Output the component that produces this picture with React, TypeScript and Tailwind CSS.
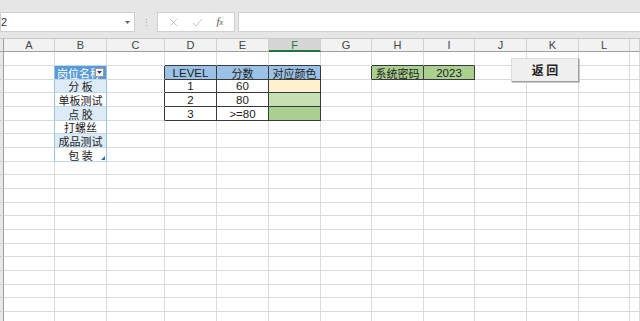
import React from "react";

const COLS = ["", "A", "B", "C", "D", "E", "F", "G", "H", "I", "J", "K", "L", ""];
const WIDTHS = ["w-[4px]", "w-[51px]", "w-[52px]", "w-[58px]", "w-[52px]", "w-[52px]", "w-[52px]", "w-[51px]", "w-[52px]", "w-[51px]", "w-[52px]", "w-[52px]", "w-[51px]", "flex-1"];

const CN = "font-['Noto_Sans_CJK_SC','Liberation_Sans',sans-serif] text-[11px]";
const LT = "font-['Liberation_Sans','Noto_Sans_CJK_SC',sans-serif] text-[11.5px]";

type Cell = { text?: string; bg?: string; color?: string; font?: string; align?: string };

const bTable: Record<number, string> = { 2: "分 板", 3: "单板测试", 4: "点 胶", 5: "打螺丝", 6: "成品测试", 7: "包 装" };

function cellData(r: number, c: number): Cell {
  if (c === 2 && r === 1) return { text: "岗位名称", bg: "bg-[#5b9bd5]", color: "text-white", font: CN, align: "justify-start pl-[2px]" };
  if (c === 2 && r >= 2 && r <= 7) return { text: bTable[r], bg: r % 2 === 0 ? "bg-[#ddebf7]" : "bg-white", color: "text-[#222]", font: CN };
  if (r === 1 && c === 4) return { text: "LEVEL", bg: "bg-[#9bc2e6]", color: "text-[#222]", font: LT };
  if (r === 1 && c === 5) return { text: "分数", bg: "bg-[#9bc2e6]", color: "text-[#222]", font: CN };
  if (r === 1 && c === 6) return { text: "对应颜色", bg: "bg-[#9bc2e6]", color: "text-[#222]", font: CN };
  if (r >= 2 && r <= 4 && c === 4) return { text: String(r - 1), color: "text-[#222]", font: LT };
  if (r >= 2 && r <= 4 && c === 5) return { text: ["60", "80", ">=80"][r - 2], color: "text-[#222]", font: LT };
  if (c === 6 && r === 2) return { bg: "bg-[#fff2cc]" };
  if (c === 6 && r === 3) return { bg: "bg-[#c6e0b4]" };
  if (c === 6 && r === 4) return { bg: "bg-[#a9d08e]" };
  if (r === 1 && c === 8) return { text: "系统密码", bg: "bg-[#a9d08e]", color: "text-[#222]", font: CN };
  if (r === 1 && c === 9) return { text: "2023", bg: "bg-[#a9d08e]", color: "text-[#222]", font: LT };
  return {};
}

function inDark(r: number, c: number) {
  return (r >= 1 && r <= 4 && c >= 4 && c <= 6) || (r === 1 && (c === 8 || c === 9));
}
function inBlue(r: number, c: number) {
  return c === 2 && r >= 1 && r <= 7;
}

function rightBorder(r: number, c: number) {
  if (inDark(r, c) || inDark(r, c + 1)) return "border-r-[#3a3a3a]";
  if (inBlue(r, c) || inBlue(r, c + 1)) return "border-r-[#9bc2e6]";
  return "border-r-[#dadada]";
}
function bottomBorder(r: number, c: number) {
  if (inDark(r, c) || inDark(r + 1, c)) return "border-b-[#3a3a3a]";
  if (inBlue(r, c) || inBlue(r + 1, c)) return "border-b-[#bdd7ee]";
  return "border-b-[#dadada]";
}

function Row({ r }: { r: number }) {
  const h = r % 3 === 2 ? "h-[13px]" : "h-[14px]";
  return (
    <div className={`flex ${h}`}>
      {COLS.map((_, c) => {
        if (c === 0) {
          return <div key={c} className="w-[4px] shrink-0 bg-[#e8e8e8] border-r border-r-[#9f9f9f] border-b border-b-[#d0d0d0]" />;
        }
        const d = cellData(r, c);
        return (
          <div
            key={c}
            className={`relative box-border flex items-center overflow-hidden whitespace-nowrap border-r border-b ${WIDTHS[c]} ${c === 13 ? "" : "shrink-0"} ${rightBorder(r, c)} ${bottomBorder(r, c)} ${d.bg ?? "bg-white"} ${d.align ?? "justify-center"}`}
          >
            {d.text && <span className={`${d.font} ${d.color} leading-[12px]`}>{d.text}</span>}
            {c === 2 && r === 1 && (
              <div className="absolute right-[2px] top-[2px] w-[9px] h-[9px] bg-[#f4f4f4] border border-[#9a9a9a] flex items-center justify-center">
                <svg width="5" height="3" viewBox="0 0 5 3"><path d="M0 0H5L2.5 3Z" fill="#444" /></svg>
              </div>
            )}
            {c === 2 && r === 7 && (
              <svg className="absolute right-[1px] bottom-[1px]" width="4" height="4" viewBox="0 0 4 4"><path d="M4 0V4H0Z" fill="#2f6db5" /></svg>
            )}
          </div>
        );
      })}
    </div>
  );
}

export default function App() {
  return (
    <div className="relative w-[640px] h-[321px] overflow-hidden bg-white">
      <div className="h-[12px] bg-[#e6e6e6]" />
      <div className="h-[20px] flex bg-[#e6e6e6]">
        <div className="w-[135px] h-[20px] bg-white border border-[#cfcfcf] flex items-center justify-between pr-[4px]">
          <span className="font-['Liberation_Sans',sans-serif] text-[11px] leading-[12px] text-[#333]">2</span>
          <svg width="5" height="3" viewBox="0 0 5 3"><path d="M0 0H5L2.5 3Z" fill="#666" /></svg>
        </div>
        <div className="w-[22px] flex flex-col items-center justify-center gap-[2px]">
          <div className="w-[1px] h-[1px] bg-[#aaa]" />
          <div className="w-[1px] h-[1px] bg-[#aaa]" />
          <div className="w-[1px] h-[1px] bg-[#aaa]" />
        </div>
        <div className="w-[78px] h-[20px] bg-white border border-[#cfcfcf] flex items-center justify-around px-[4px]">
          <svg width="9" height="9" viewBox="0 0 9 9"><path d="M1 1L8 8M8 1L1 8" stroke="#c4c4c4" strokeWidth="1" /></svg>
          <svg width="11" height="9" viewBox="0 0 11 9"><path d="M1 5L4 8L10 1" stroke="#c4c4c4" strokeWidth="1" fill="none" /></svg>
          <span className="font-['Liberation_Serif',serif] italic text-[11px] leading-[12px] text-[#555]">f<span className="text-[8px]">x</span></span>
        </div>
        <div className="w-[3px]" />
        <div className="flex-1 h-[20px] bg-white border border-[#cfcfcf] border-r-0" />
      </div>
      <div className="h-[6px] bg-[#e6e6e6]" />
      <div className="flex h-[14px] bg-[#f2f2f2] border-t border-t-[#c8c8c8]">
        {COLS.map((name, c) => (
          <div
            key={c}
            className={`box-border flex items-center justify-center border-r ${c === 0 ? "border-r-[#9f9f9f] bg-[#e8e8e8]" : "border-r-[#d0d0d0]"} ${WIDTHS[c]} ${c === 13 ? "" : "shrink-0"} ${c === 6 ? "bg-[#d6d6d6] border-b-2 border-b-[#217346]" : "border-b border-b-[#9f9f9f]"}`}
          >
            <span className={`font-['Liberation_Sans',sans-serif] text-[11px] leading-[12px] ${c === 6 ? "text-[#217346]" : "text-[#444]"}`}>{name}</span>
          </div>
        ))}
      </div>
      <div className="flex flex-col">
        {Array.from({ length: 20 }).map((_, r) => (
          <Row key={r} r={r} />
        ))}
      </div>
      <div className="absolute left-[511px] top-[58px] w-[68px] h-[24px] bg-[#f0f0f0] border border-[#dcdcdc] border-r-[#a0a0a0] border-b-[#a0a0a0] shadow-[1px_1px_0_#c8c8c8] flex items-center justify-center">
        <span className="font-['Noto_Sans_CJK_SC',sans-serif] text-[12px] leading-[14px] font-bold text-[#222]">返 回</span>
      </div>
    </div>
  );
}
